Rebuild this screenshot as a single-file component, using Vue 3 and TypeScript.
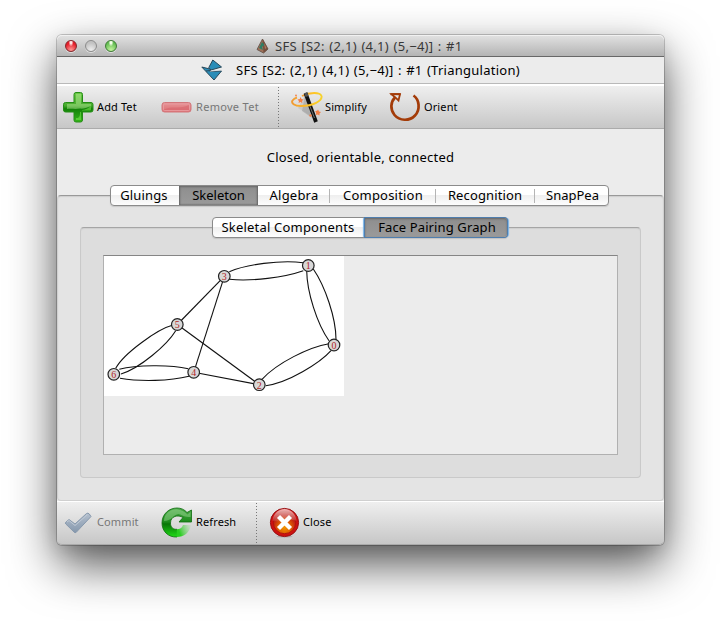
<script setup lang="ts">
import { ref } from 'vue'

interface Tab { label: string; cls: string }
interface GraphNode { id: number; x: number; y: number }

const title = 'SFS [S2: (2,1) (4,1) (5,−4)] : #1'
const tabs: Tab[] = [
  { label: 'Gluings', cls: 'gluings' },
  { label: 'Skeleton', cls: 'skeleton' },
  { label: 'Algebra', cls: 'algebra' },
  { label: 'Composition', cls: 'composition' },
  { label: 'Recognition', cls: 'recognition' },
  { label: 'SnapPea', cls: 'snappea' },
]
const subTabs: Tab[] = [
  { label: 'Skeletal Components', cls: 'components' },
  { label: 'Face Pairing Graph', cls: 'pairing' },
]
const current = ref('Skeleton')
const currentSub = ref('Face Pairing Graph')

const nodes: GraphNode[] = [
  { id: 0, x: 230, y: 89 },
  { id: 1, x: 204.3, y: 9.5 },
  { id: 2, x: 155.3, y: 128.7 },
  { id: 3, x: 120.3, y: 20.3 },
  { id: 4, x: 89.7, y: 116.3 },
  { id: 5, x: 73.3, y: 68.5 },
  { id: 6, x: 9.8, y: 118.3 },
]
const edges: string[] = [
  'M125.3 15.7C142 8.5 176 3.8 199.3 6.7',
  'M125.3 23.3C148 25.5 180 21.5 199.3 14.7',
  'M202.7 14.7C203 36 213 68 225 84.7',
  'M209.3 13C221 30 232 62 232 83.3',
  'M225 87.7C205 91 173 107 158 123.3',
  'M227 94.7C216 107 184 127 161.7 129.7',
  'M68.3 69.3C54 73 20 97 11.7 112.3',
  'M71.7 74.7C63 89 36 112 17 118',
  'M15.3 113.3C32 109 66 108.5 84.3 112.7',
  'M16 122.3C36 125.7 66 125.2 85 120.3',
  'M120.3 20.3L73.3 68.5',
  'M120.3 20.3L89.7 116.3',
  'M73.3 68.5L155.3 128.7',
  'M89.7 116.3L155.3 128.7',
]
</script>

<template>
  <main class="desktop">
    <section class="window">
      <header class="titlebar">
        <div class="lights"><i class="light red"></i><i class="light off"></i><i class="light green"></i></div>
        <svg class="doc-icon" width="14" height="16" viewBox="0 0 14 16">
          <path d="M7.500 1L2 11.500L8.500 15L13 11Z" fill="#a07059" stroke="#5c4c43" stroke-width=".8" />
          <path d="M7.500 1L8.500 15L13 11Z" fill="#73503f" />
          <path d="M7 4L4 10L8 12L7 9L9.500 7Z" fill="#2f7d64" />
          <path d="M9 5L11.500 10L10 11Z" fill="#b0765b" />
        </svg>
        <span class="title-text">{{ title }}</span>
      </header>
      <div class="subtitle">
        <svg class="packet-icon" width="22" height="22" viewBox="0 0 22 22">
          <path d="M.8 8L10 10.300L9 12.500L20.500 12L13 21Z" fill="#2a8db8" stroke="#28485a" stroke-width="1" stroke-linejoin="round" />
          <path d="M11.800 1L20.500 8L10 11L7.800 8.500Z" fill="#2a8db8" stroke="#28485a" stroke-width="1" stroke-linejoin="round" />
          <path d="M9 12.200L20.600 10.800" stroke="#dce6ea" stroke-width=".8" />
          <path d="M5 12L9.500 11.500" stroke="#28485a" stroke-width="1" />
        </svg>
        <span class="subtitle-text">{{ title }} (Triangulation)</span>
      </div>

      <nav class="toolbar">
        <button class="tool add">
          <svg width="32" height="32" viewBox="0 0 32 32">
            <defs>
              <linearGradient id="plus" x1="0" y1="0" x2="0" y2="1">
                <stop offset="0" stop-color="#6dcb47" /><stop offset=".45" stop-color="#45a92c" />
                <stop offset=".55" stop-color="#138108" /><stop offset="1" stop-color="#35b61a" />
              </linearGradient>
            </defs>
            <path d="M13 1.500h4.500a2 2 0 0 1 2 2v8h8.500a2 2 0 0 1 2 2v5.500a2 2 0 0 1-2 2h-8.500v8a2 2 0 0 1-2 2h-4.500a2 2 0 0 1-2-2v-8h-8.500a2 2 0 0 1-2-2v-5.500a2 2 0 0 1 2-2h8.500v-8a2 2 0 0 1 2-2z" fill="url(#plus)" stroke="#258d16" />
            <path d="M13 3h5v10h10v2c-5 2-8 3-11 2.500c-4 1-8 0-13 .500v-5h9z" fill="#c4f1a5" opacity=".42" />
            <path d="M19 19c4-.5 7-2 9-4v3.500q0 1-1 1h-8zM13 27c4 .5 4-3 4-6h1v8h-5z" fill="#78e94f" opacity=".55" />
          </svg><span>Add Tet</span>
        </button>
        <button class="tool remove disabled">
          <svg width="32" height="32" viewBox="0 0 32 32">
            <defs><linearGradient id="minus" x1="0" y1="0" x2="0" y2="1">
              <stop offset="0" stop-color="#e69598" /><stop offset=".5" stop-color="#e28285" /><stop offset="1" stop-color="#de7377" />
            </linearGradient></defs>
            <rect x="1" y="11.500" width="29" height="9.500" rx="2.500" fill="url(#minus)" stroke="#d2777b" />
            <rect x="2.500" y="13" width="26" height="6.500" rx="1" fill="none" stroke="#e9a0a3" stroke-width=".8" />
            <path d="M3 18.500C13 14 17 19 28 14V19H3Z" fill="#d66068" opacity=".5" />
          </svg><span>Remove Tet</span>
        </button>
        <i class="separator"></i>
        <button class="tool simplify">
          <svg width="32" height="32" viewBox="0 0 32 32">
            <defs><linearGradient id="halo" x1="0" x2="1"><stop offset="0" stop-color="#f09a35" /><stop offset=".55" stop-color="#ffc326" /><stop offset="1" stop-color="#f6d22a" /></linearGradient></defs>
            <path d="M14 4L7 17L20 25Z" fill="#999" opacity=".28" />
            <path d="M14 4L11 20L21 27Z" fill="#777" opacity=".3" />
            <path d="M11 5C19 1 29 1 30.500 5" fill="none" stroke="url(#halo)" stroke-width="1.800" />
            <path d="M14.500 2L25 31" stroke="#111" stroke-width="3.800" />
            <path d="M13.200 2.200L16.200 1.200L17.500 5L14.600 6Z" fill="#555" />
            <path d="M18.500 14L23.500 27" stroke="#888" stroke-width=".8" />
            <path d="M30.500 5C31.500 10 22 15 10 15C3 15 0 12 1.500 9.500Q3 7.500 6 6.500" fill="none" stroke="url(#halo)" stroke-width="1.900" />
            <g fill="#f47f45"><circle cx="5" cy="4.500" r=".9" /><path d="M9.500 6L10.500 8L12.500 8.500L11 10L11.300 12L9.500 11L7.500 12L8 10L6.500 8.500L8.800 8Z" /><path d="M27 18.500l1 2 2 .5-1.500 1.500v2l-2-1-1.800.5.500-2-1-2 2-.2z" /><circle cx="19.500" cy="24.500" r="1.200" /></g>
          </svg><span>Simplify</span>
        </button>
        <button class="tool orient">
          <svg width="32" height="32" viewBox="0 0 32 32" fill="none" stroke="#a33b08">
            <path d="M24.500 4.500C30.500 8.500 31.500 19 26 24.500C20.500 30.500 10.500 30 5.500 24C1 18.500 1.500 11 6 6.500" stroke-width="2.700" />
            <path d="M2.500 3.200H11L9.500 9.500L6 6.200Z" stroke-width="1.800" />
            <path d="M1.500 3.200H11.500" stroke-width="2" />
          </svg><span>Orient</span>
        </button>
      </nav>

      <div class="content">
        <p class="status">Closed, orientable, connected</p>
        <div class="pane">
          <div class="tabs">
            <button v-for="tab in tabs" :key="tab.label" class="tab" :class="[tab.cls, { active: current === tab.label }]" @click="current = tab.label"><span>{{ tab.label }}</span></button>
          </div>
          <div class="subpane">
            <div class="tabs subtabs">
              <button v-for="tab in subTabs" :key="tab.label" class="tab" :class="[tab.cls, { active: currentSub === tab.label }]" @click="currentSub = tab.label"><span>{{ tab.label }}</span></button>
            </div>
            <div class="viewer">
              <svg class="graph" width="240" height="140" viewBox="0 0 240 140">
                <path v-for="(d, i) in edges" :key="i" class="edge" :d="d" />
                <g v-for="n in nodes" :key="n.id">
                  <circle class="node" :cx="n.x" :cy="n.y" r="5.800" />
                  <text :x="n.x" :y="n.y + 3.900">{{ n.id }}</text>
                </g>
              </svg>
            </div>
          </div>
        </div>
      </div>

      <footer class="toolbar bottom">
        <button class="tool commit disabled">
          <svg width="32" height="32" viewBox="0 0 32 32">
            <defs><linearGradient id="check" x1="0" y1="0" x2="0" y2="1"><stop offset="0" stop-color="#b5c0ce" /><stop offset="1" stop-color="#8598ad" /></linearGradient></defs>
            <path d="M2.500 15.500L6 12.500L12 17L23.500 6.500Q25 5.500 26.300 7L28 9.500L13 25.500Q12 26 11 25L2.800 17Q2 16 2.500 15.500Z" fill="url(#check)" stroke="#8799ad" />
            <path d="M4 15L6 13.500L12 18.500L24.500 7.500" fill="none" stroke="#c0cad6" stroke-width="1" />
          </svg><span>Commit</span>
        </button>
        <button class="tool refresh">
          <svg width="32" height="32" viewBox="0 0 32 32">
            <defs>
              <linearGradient id="reload" x1="0" y1="0" x2="0" y2="1"><stop offset="0" stop-color="#4eac4b" /><stop offset=".48" stop-color="#1c8b1b" /><stop offset=".55" stop-color="#087507" /><stop offset="1" stop-color="#20dc17" /></linearGradient>
              <linearGradient id="tail" x1="0" y1="0" x2="1" y2="-.3"><stop offset="0" stop-color="#29ce20" /><stop offset="1" stop-color="#8bda85" stop-opacity="0" /></linearGradient>
            </defs>
            <path d="M16 30C7 30.500 1 24 1 16C1 7 8 1 16 1C20 1 23.500 2.600 26 5.500L30.500 3V15H18L22 10.500C17 7.500 9.500 9 9.500 16C9.500 20.500 12 22.500 16 22.300V30Z" fill="url(#reload)" />
            <path d="M16 30C7 30.500 1 24 1 16C1 7 8 1 16 1C20 1 23.500 2.600 26 5.500L30.500 3V15H18L22 10.500C17 7.500 9.500 9 9.500 16C9.500 20.500 12 22.500 16 22.300" fill="none" stroke="#0d6c0d" stroke-width=".8" />
            <path d="M15.800 30V22.300C19 22.300 21 21 22 18H30C28.500 26 23 30 15.800 30Z" fill="url(#tail)" />
            <path d="M3 14C3 6 11 1.500 17 2.500C21 3 24 5 26.500 7.500L29.500 5V10C19 11 20 3 12 10Q8 14 3 14Z" fill="#c2efbb" opacity=".35" />
          </svg><span>Refresh</span>
        </button>
        <i class="separator"></i>
        <button class="tool close">
          <svg width="32" height="32" viewBox="0 0 32 32">
            <defs>
              <radialGradient id="ember" cx=".5" cy=".72" r=".55"><stop offset="0" stop-color="#f19500" /><stop offset=".5" stop-color="#df6100" /><stop offset="1" stop-color="#bd1813" /></radialGradient>
              <linearGradient id="gloss" x1="0" y1="0" x2="0" y2="1"><stop offset="0" stop-color="#fff" stop-opacity=".7" /><stop offset="1" stop-color="#fff" stop-opacity=".08" /></linearGradient>
            </defs>
            <ellipse cx="15.500" cy="29.500" rx="8" ry="1" fill="#777" opacity=".3" />
            <circle cx="15.500" cy="15.500" r="14.100" fill="#ce1010" stroke="#971315" />
            <circle cx="15.500" cy="15.500" r="11.200" fill="url(#ember)" stroke="#b0140d" />
            <path d="M3.500 14C4 7 9 2 15.500 2S27 7 27.500 14C20 11 17 16 3.500 14Z" fill="url(#gloss)" />
            <path d="M9.500 9.500L21.500 21.500M21.500 9.500L9.500 21.500" stroke="#fff" stroke-width="4.300" />
          </svg><span>Close</span>
        </button>
      </footer>
    </section>
  </main>
</template>

<style>
html, body { margin: 0; background: #fff; }
</style>

<style scoped>
.desktop { box-sizing: border-box; width: 721px; height: 624px; padding: 35px 0 0 57px; overflow: hidden; background: #fff; font-family: "Noto Sans", sans-serif; font-size: 13px; color: #000; }
.window { width: 607px; height: 510px; display: flex; flex-direction: column; border-radius: 5px; background: #ececec; box-shadow: 0 0 0 1px rgba(0,0,0,.2), 0 6px 18px rgba(0,0,0,.1), 0 20px 47px rgba(0,0,0,.66); }
.titlebar { box-sizing: border-box; height: 22px; display: flex; align-items: center; border-radius: 5px 5px 0 0; border-bottom: 1px solid #676767; background: linear-gradient(#e2e2e2, #b4b4b4); box-shadow: inset 0 1px #f1f1f1; color: #383838; }
.lights { width: 198px; display: flex; gap: 8px; padding-left: 8px; box-sizing: border-box; }
.light { box-sizing: border-box; width: 12px; height: 12px; border-radius: 50%; border: 1px solid #777; box-shadow: 0 1px rgba(255,255,255,.5); }
.red { border-color: #83272b; background: radial-gradient(ellipse at 50% 12%, #ffe4e4 0 12%, transparent 35%), radial-gradient(circle at 50% 90%, #ff9a96, #e51e2a 65%); }
.off { border-color: #8c8c8c; background: radial-gradient(circle at 50% 90%, #eee, #c2c2c2 70%); }
.green { border-color: #3f7a36; background: radial-gradient(ellipse at 50% 12%, #f3ffe9 0 12%, transparent 35%), radial-gradient(circle at 50% 90%, #c5f5a0, #64bd52 70%); }
.doc-icon { margin-right: 6px; }
.title-text, .subtitle-text, .tab span, .tool span, .status { white-space: nowrap; }
.title-text { letter-spacing: .29px; word-spacing: .8px; }
.subtitle-text { letter-spacing: .26px; word-spacing: .8px; }
.subtitle { box-sizing: border-box; height: 27px; border-bottom: 1px solid #b9b9b9; display: flex; align-items: center; padding-left: 144px; }
.packet-icon { margin-right: 13px; }
.toolbar { box-sizing: border-box; height: 45px; flex: none; display: flex; align-items: center; border-top: 2px solid #fff; border-bottom: 1px solid #ababab; background: linear-gradient(#efefef, #c7c7c7); }
button { font: inherit; color: inherit; border: 0; margin: 0; padding: 0; background: none; }
.tool { display: flex; align-items: center; height: 32px; font-size: 11px; letter-spacing: .12px; box-sizing: border-box; }
.tool svg { flex: none; margin-right: 2px; }
.tool span { padding-bottom: 2px; }
.tool.disabled { color: #777; }
.add { width: 99px; padding-left: 6px; }
.remove { width: 122px; padding-left: 5px; letter-spacing: .3px; }
.remove svg, .refresh svg { margin-right: 3px; }
.separator { width: 1px; height: 41px; background: repeating-linear-gradient(#777 0 1px, transparent 1px 3px); }
.simplify { width: 99px; padding-left: 12px; }
.orient { padding-left: 11px; }
.orient svg { margin-right: 3px; }
.content { box-sizing: border-box; height: 372px; padding-top: 19px; }
.status { height: 18px; line-height: 18px; margin: 0; text-align: center; letter-spacing: .22px; }
.pane { box-sizing: border-box; height: 306px; margin-top: 29px; border: 1px solid #d0d0d0; border-top: 1px solid #999; border-radius: 4px; background: #e4e4e4; box-shadow: inset 0 1px 1px #cecece; }
.tabs { box-sizing: border-box; height: 21px; width: 499px; margin: -11px 0 0 52px; display: flex; border: 1px solid #8b8b8b; border-radius: 4px; background: linear-gradient(#fff 0 45%, #efefef 50%, #fdfdfd); box-shadow: 0 1px 1px rgba(0,0,0,.12); }
.tab { box-sizing: border-box; height: 19px; line-height: 19px; text-align: center; }
.gluings { width: 68px; padding-right: 2px; letter-spacing: .15px; }
.skeleton { width: 79px; }
.algebra { width: 72px; letter-spacing: .2px; }
.composition { width: 106px; letter-spacing: .2px; }
.recognition { width: 99px; padding-right: 1px; letter-spacing: .12px; }
.snappea { width: 73px; padding-left: 2px; }
.tab.algebra, .tab.composition, .tab.recognition { background: linear-gradient(#b5b5b5, #b5b5b5) right 3px / 1px 14px no-repeat; }
.tab.active { background: linear-gradient(#8e8e8e, #9a9a9a); box-shadow: inset 1px 0 2px #666, inset -1px 0 2px #666, inset 0 1px 2px #747474; }
.subpane { box-sizing: border-box; width: 561px; height: 251px; margin: 21px 0 0 22px; border: 1px solid #c9c9c9; border-top-color: #a5a5a5; border-radius: 4px; background: #dddddd; box-shadow: inset 0 1px 1px #cfcfcf; }
.subtabs { width: 296px; margin-left: 131px; }
.components { width: 152px; padding-right: 2px; letter-spacing: .2px; }
.pairing { width: 142px; padding-left: 2px; letter-spacing: .12px; }
.subtabs .active { border-radius: 0 3px 3px 0; box-shadow: 0 0 0 1px #4f7eae, -2px 0 1px #79b3e6, 2px 0 1px #79b3e6, inset 0 1px 2px #666; }
.viewer { box-sizing: border-box; width: 515px; height: 200px; margin: 17px 0 0 22px; border: 1px solid #b0b0b0; border-top-color: #858585; background: #ececec; }
.graph { display: block; background: #fff; }
.edge { fill: none; stroke: #111; stroke-width: 1.1; }
.node { fill: #d8d8d8; stroke: #222; stroke-width: 1.2; }
.graph text { font-family: "Liberation Serif", serif; font-size: 10px; fill: #b22525; text-anchor: middle; }
.bottom { height: 44px; border-top-width: 1px; border-bottom-color: #aaa; border-radius: 0 0 5px 5px; }
.bottom .tool { margin-top: -1px; }
.commit { width: 99px; padding-left: 6px; }
.refresh { width: 100px; padding-left: 5px; }
.close { padding-left: 12px; }
</style>
